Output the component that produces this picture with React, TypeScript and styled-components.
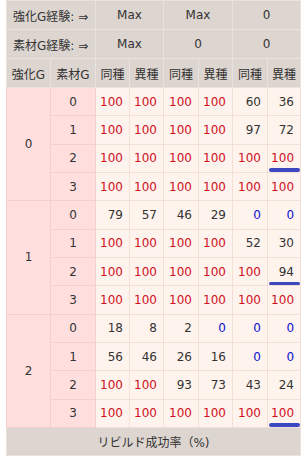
import React from "react";
import styled, { createGlobalStyle } from "styled-components";

const Global = createGlobalStyle`
  html, body { margin: 0; padding: 0; background: #ffffff; }
  body { font-family: "DejaVu Sans", "Noto Sans CJK JP", sans-serif; }
`;

const Wrap = styled.div`
  padding: 0 0 0 6px;
`;

const Table = styled.table`
  border-collapse: collapse;
  table-layout: fixed;
  width: 294px;
  font-family: "DejaVu Sans", "Noto Sans CJK JP", sans-serif;
  font-size: 12px;
  color: #333333;
`;

const Row = styled.tr<{ $h: number }>`
  height: ${(p) => p.$h}px;
`;

const HeadCell = styled.td<{ $align?: string }>`
  background: #ddd5d0;
  border: 1px solid #e9e3df;
  text-align: ${(p) => p.$align || "center"};
  padding: 0 ${(p) => (p.$align === "left" ? "6px" : "0")};
  white-space: nowrap;
  overflow: visible;
`;

const GroupCell = styled.td`
  background: #ffdede;
  border: 1px solid #f3cfcf;
  text-align: center;
  padding: 0;
`;

const SubCell = styled.td`
  background: #ffdede;
  border: 1px solid #f3cfcf;
  text-align: center;
  padding: 0;
`;

const ValueCell = styled.td<{ $tone: "red" | "blue" | "plain" }>`
  position: relative;
  background: #fff3ee;
  border: 1px solid #f1dfd8;
  text-align: right;
  padding: 0 6px 0 0;
  white-space: nowrap;
  color: ${(p) => (p.$tone === "red" ? "#d0101c" : p.$tone === "blue" ? "#1010d0" : "#333333")};
`;

const Mark = styled.span`
  position: absolute;
  left: 1px;
  right: 0;
  bottom: 0;
  height: 3.5px;
  border-radius: 2px;
  background: #3b48c0;
`;

const Foot = styled.td`
  background: #ddd5d0;
  border: 1px solid #e9e3df;
  text-align: center;
`;

type Group = { g: number; rows: { s: number; v: number[]; mark?: boolean }[] };

const groups: Group[] = [
  {
    g: 0,
    rows: [
      { s: 0, v: [100, 100, 100, 100, 60, 36] },
      { s: 1, v: [100, 100, 100, 100, 97, 72] },
      { s: 2, v: [100, 100, 100, 100, 100, 100], mark: true },
      { s: 3, v: [100, 100, 100, 100, 100, 100] },
    ],
  },
  {
    g: 1,
    rows: [
      { s: 0, v: [79, 57, 46, 29, 0, 0] },
      { s: 1, v: [100, 100, 100, 100, 52, 30] },
      { s: 2, v: [100, 100, 100, 100, 100, 94], mark: true },
      { s: 3, v: [100, 100, 100, 100, 100, 100] },
    ],
  },
  {
    g: 2,
    rows: [
      { s: 0, v: [18, 8, 2, 0, 0, 0] },
      { s: 1, v: [56, 46, 26, 16, 0, 0] },
      { s: 2, v: [100, 100, 93, 73, 43, 24] },
      { s: 3, v: [100, 100, 100, 100, 100, 100], mark: true },
    ],
  },
];

const colWidths = [44, 45, 34, 34, 35, 34, 35, 33];

const tone = (n: number): "red" | "blue" | "plain" => (n === 100 ? "red" : n === 0 ? "blue" : "plain");

export default function App() {
  return (
    <Wrap>
      <Global />
      <Table>
        <colgroup>
          {colWidths.map((w, i) => (
            <col key={i} style={{ width: w }} />
          ))}
        </colgroup>
        <tbody>
          <Row $h={29}>
            <HeadCell colSpan={2} $align="left">強化G経験: ⇒</HeadCell>
            <HeadCell colSpan={2}>Max</HeadCell>
            <HeadCell colSpan={2}>Max</HeadCell>
            <HeadCell colSpan={2}>0</HeadCell>
          </Row>
          <Row $h={29}>
            <HeadCell colSpan={2} $align="left">素材G経験: ⇒</HeadCell>
            <HeadCell colSpan={2}>Max</HeadCell>
            <HeadCell colSpan={2}>0</HeadCell>
            <HeadCell colSpan={2}>0</HeadCell>
          </Row>
          <Row $h={29}>
            <HeadCell>強化G</HeadCell>
            <HeadCell>素材G</HeadCell>
            <HeadCell>同種</HeadCell>
            <HeadCell>異種</HeadCell>
            <HeadCell>同種</HeadCell>
            <HeadCell>異種</HeadCell>
            <HeadCell>同種</HeadCell>
            <HeadCell>異種</HeadCell>
          </Row>
          {groups.map((grp) =>
            grp.rows.map((r, ri) => (
              <Row $h={28.33} key={`${grp.g}-${r.s}`}>
                {ri === 0 && <GroupCell rowSpan={4}>{grp.g}</GroupCell>}
                <SubCell>{r.s}</SubCell>
                {r.v.map((n, i) => (
                  <ValueCell key={i} $tone={tone(n)}>
                    {n}
                    {r.mark && i === 5 && <Mark />}
                  </ValueCell>
                ))}
              </Row>
            ))
          )}
          <Row $h={28}>
            <Foot colSpan={8}>リビルド成功率（%)</Foot>
          </Row>
        </tbody>
      </Table>
    </Wrap>
  );
}
